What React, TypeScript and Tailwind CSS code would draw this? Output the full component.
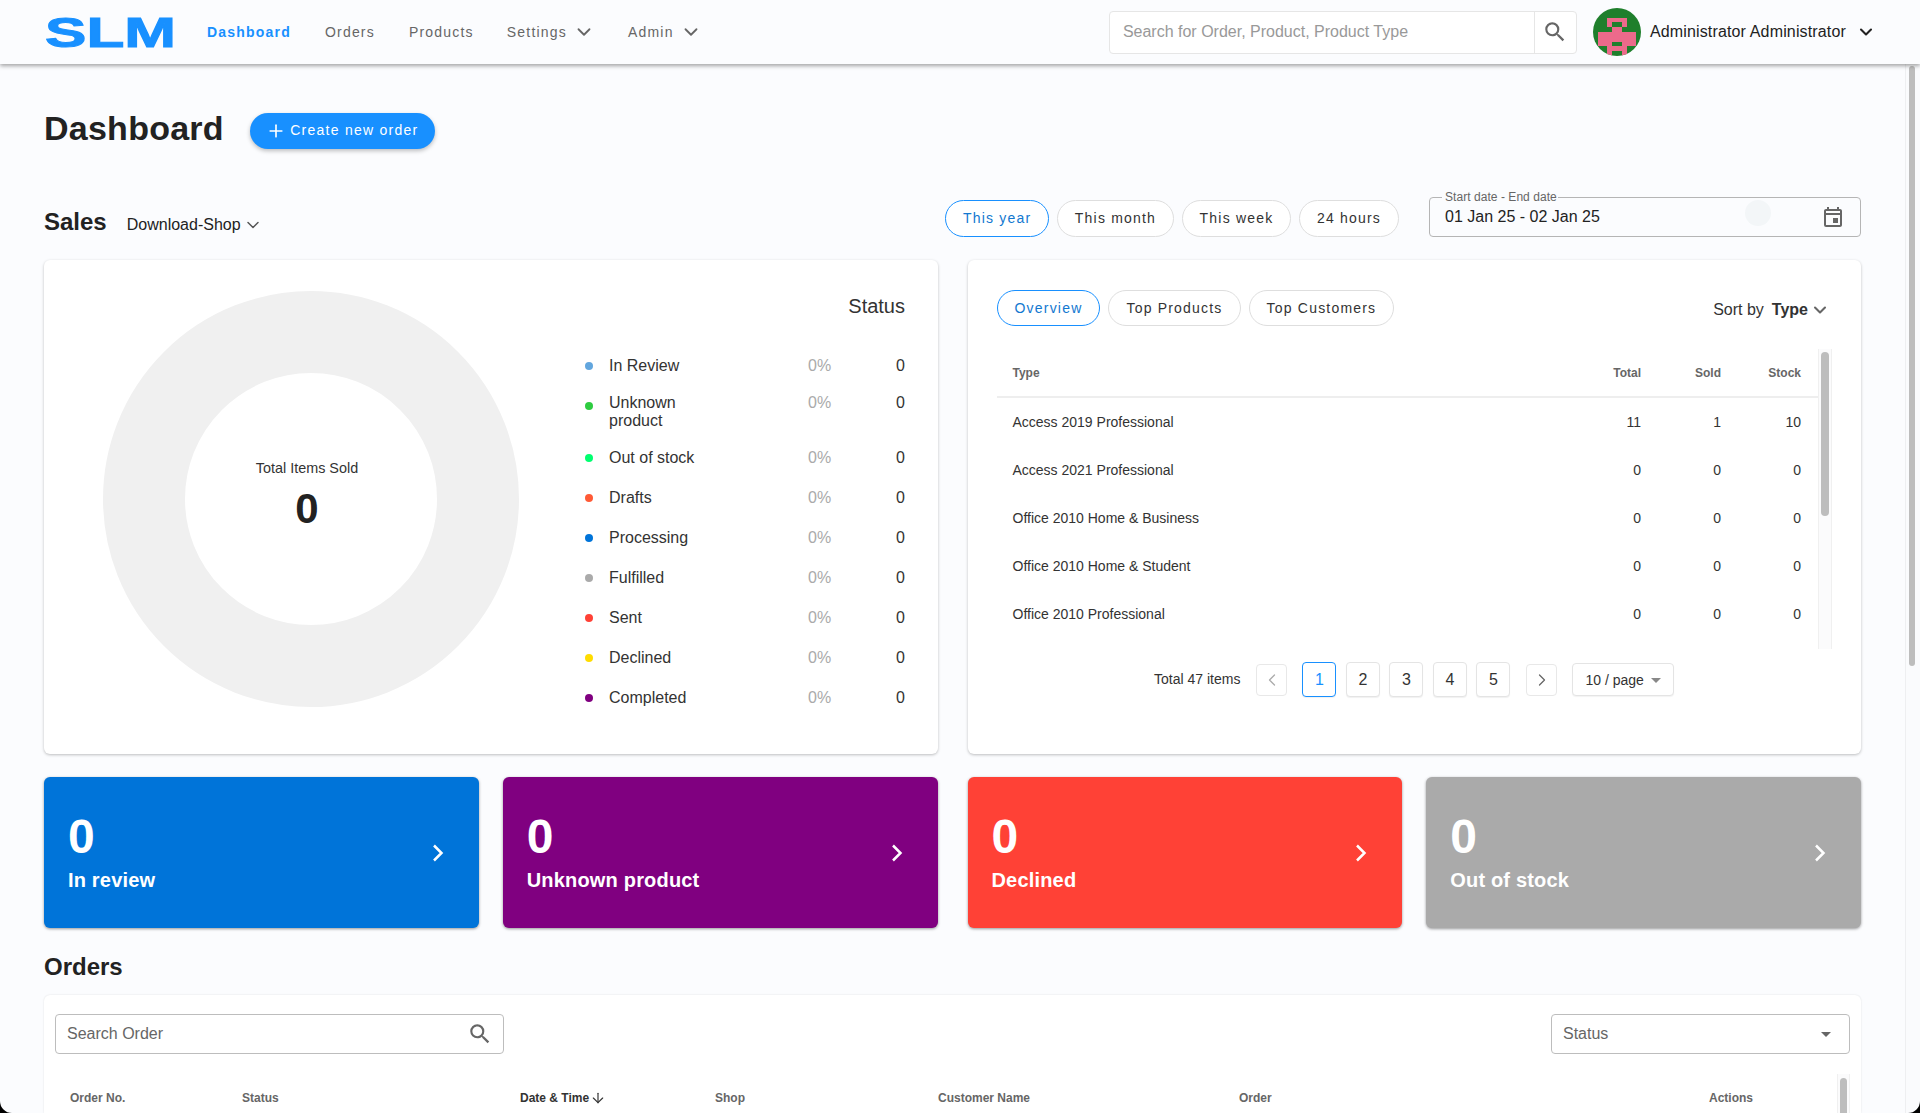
import React from "react";
import { ChevronDown, ChevronLeft, ChevronRight, Plus, ArrowDown } from "lucide-react";
import { MdSearch, MdOutlineEvent, MdArrowDropDown } from "react-icons/md";

const legend = [
  { c: "bg-[#62a6de]", l: "In Review" },
  { c: "bg-[#2ecc40]", l: "Unknown product", two: true },
  { c: "bg-[#01ff70]", l: "Out of stock" },
  { c: "bg-[#ff5a36]", l: "Drafts" },
  { c: "bg-[#0074d9]", l: "Processing" },
  { c: "bg-[#aaaaaa]", l: "Fulfilled" },
  { c: "bg-[#ff4136]", l: "Sent" },
  { c: "bg-[#ffdc00]", l: "Declined" },
  { c: "bg-[#800080]", l: "Completed" },
];

const rows = [
  ["Access 2019 Professional", "11", "1", "10"],
  ["Access 2021 Professional", "0", "0", "0"],
  ["Office 2010 Home & Business", "0", "0", "0"],
  ["Office 2010 Home & Student", "0", "0", "0"],
  ["Office 2010 Professional", "0", "0", "0"],
];

const stats = [
  [
    { l: "In review", c: "bg-[#0074d9]" },
    { l: "Unknown product", c: "bg-[#800080]" },
  ],
  [
    { l: "Declined", c: "bg-[#ff4136]" },
    { l: "Out of stock", c: "bg-[#aaaaaa]" },
  ],
];

const pink: [number, number][] = [
  [2, 3], [2, 4], [2, 5], [2, 6],
  [3, 3], [3, 6],
  [4, 4], [4, 5],
  [5, 1], [5, 2], [5, 3], [5, 4], [5, 5], [5, 6], [5, 7], [5, 8],
  [6, 1], [6, 2], [6, 3], [6, 4], [6, 5], [6, 6], [6, 7], [6, 8],
  [7, 1], [7, 2], [7, 3], [7, 6], [7, 7], [7, 8],
  [8, 3], [8, 4], [8, 5], [8, 6],
  [9, 3], [9, 6],
];

function Avatar() {
  return (
    <svg width="48" height="48" viewBox="0 0 10 10" shapeRendering="crispEdges" className="rounded-full shrink-0">
      <rect width="10" height="10" fill="#1f7f2c" />
      {pink.map(([r, c]) => (
        <rect key={`${r}-${c}`} x={c} y={r} width="1" height="1" fill="#ec6a8b" />
      ))}
    </svg>
  );
}

function Pill({ label, active }: { label: string; active?: boolean }) {
  return (
    <div
      className={`h-[37px] px-[17px] rounded-full border bg-white flex items-center text-[14px] tracking-[1.2px] ${
        active ? "border-[#1890ff] text-[#1278d0]" : "border-[#dedede] text-[#333]"
      }`}
    >
      {label}
    </div>
  );
}

function PageBtn({ n, active }: { n: string; active?: boolean }) {
  return (
    <div
      className={`w-[34px] h-[35px] rounded-[4px] border flex items-center justify-center text-[16px] bg-white shadow-[0_1px_1px_rgba(0,0,0,0.06)] ${
        active ? "border-[#1890ff] text-[#1890ff]" : "border-[#e4e4e4] text-[#333]"
      }`}
    >
      {n}
    </div>
  );
}

export default function App() {
  return (
    <div className="relative w-full h-[1113px] overflow-hidden flex flex-col bg-[#fbfcfe] text-[#222] font-['Liberation_Sans',Arial,sans-serif]">
      <header className="relative z-10 h-16 shrink-0 flex items-center bg-[#fbfcfe] shadow-[0_2px_4px_rgba(0,0,0,0.35)] pl-[45px]">
        <svg width="131" height="34" viewBox="0 0 131 34" className="shrink-0 overflow-visible" role="img" aria-label="SLM">
          <text
            x="0"
            y="32"
            fontFamily="'Liberation Sans', Arial, sans-serif"
            fontWeight="700"
            fontSize="42"
            fill="#1890ff"
            stroke="#1890ff"
            strokeWidth="1"
            textLength="131"
            lengthAdjust="spacingAndGlyphs"
          >
            SLM
          </text>
        </svg>
        <nav className="ml-[31px] flex items-center gap-[34px] text-[14px] tracking-[1.2px] text-[#666]">
          <span className="font-bold text-[#1890ff]">Dashboard</span>
          <span>Orders</span>
          <span>Products</span>
          <span className="flex items-center ml-[-1px]">
            Settings
            <ChevronDown size={22} strokeWidth={2} className="ml-[6px]" />
          </span>
          <span className="flex items-center ml-[-1px]">
            Admin
            <ChevronDown size={22} strokeWidth={2} className="ml-[6px]" />
          </span>
        </nav>
        <div className="ml-auto flex items-center pr-[44px]">
          <div className="w-[468px] h-[43px] border border-[#e6e6e6] rounded-[4px] bg-white flex items-center">
            <input
              readOnly
              placeholder="Search for Order, Product, Product Type"
              className="flex-1 min-w-0 h-full pl-[13px] text-[16px] bg-transparent outline-none placeholder:text-[#999]"
            />
            <div className="w-[42px] h-full border-l border-[#e6e6e6] flex items-center justify-center text-[#666]">
              <MdSearch size={26} />
            </div>
          </div>
          <div className="ml-4">
            <Avatar />
          </div>
          <span className="ml-[9px] text-[16px] tracking-[0.15px] text-[#222] whitespace-nowrap">Administrator Administrator</span>
          <ChevronDown size={20} strokeWidth={2.5} className="ml-[10px] text-[#222]" />
        </div>
      </header>

      <div className="flex-1 min-h-0 flex">
        <main className="flex-1 min-w-0 px-[44px] flex flex-col overflow-hidden">
          <div className="mt-12 h-9 flex items-center shrink-0">
            <h1 className="text-[34px] leading-9 font-bold tracking-[0.25px] text-[#222] mt-[-5px]">Dashboard</h1>
            <button className="ml-[26px] mt-[1px] w-[185px] h-9 rounded-full bg-[#1890ff] text-white flex items-center justify-center text-[14px] tracking-[1.25px] shadow-[0_2px_4px_rgba(0,0,0,0.25)]">
              <Plus size={20} strokeWidth={2} className="mr-[4px]" />
              Create new order
            </button>
          </div>

          <div className="mt-[49px] h-10 flex items-start shrink-0">
            <h2 className="text-[24px] leading-[50px] h-10 font-bold">Sales</h2>
            <div className="ml-[20px] mt-[16px] flex items-center text-[16px] text-[#222] leading-6">
              Download-Shop
              <ChevronDown size={20} strokeWidth={1.75} className="ml-[2px] text-[#555]" />
            </div>
            <div className="ml-auto mt-[3px] flex gap-[7.5px]">
              <Pill label="This year" active />
              <Pill label="This month" />
              <Pill label="This week" />
              <Pill label="24 hours" />
            </div>
            <div className="relative ml-[30px] w-[432px] h-10 border border-[#b5b5b5] rounded-[4px] flex items-center pl-[15px] pr-[15px]">
              <span className="absolute left-[12px] -top-[8px] pl-[3px] pr-[1px] bg-[#fbfcfe] text-[12px] tracking-[0.05px] leading-[14px] text-[#666]">
                Start date - End date
              </span>
              <span className="text-[16px] text-[#222]">01 Jan 25 - 02 Jan 25</span>
              <span className="absolute left-[315px] top-[2px] w-[26px] h-[26px] rounded-full bg-[#f3f6f8]" />
              <MdOutlineEvent size={24} className="ml-auto text-[#666]" />
            </div>
          </div>

          <div className="mt-[23px] grid grid-cols-2 gap-[30px] shrink-0">
            <section className="relative h-[494px] bg-white rounded-[6px] shadow-[0_1px_3px_rgba(0,0,0,0.25)] flex items-start pl-[59px]">
              <div className="relative w-[416px] h-[416px] mt-[31px] shrink-0">
                <svg width="416" height="416" viewBox="0 0 416 416">
                  <circle cx="208" cy="208" r="167" fill="none" stroke="#f0f0f0" strokeWidth="82" />
                </svg>
                <div className="absolute left-[-4px] right-[4px] top-[169px] flex flex-col items-center">
                  <span className="text-[14.4px] leading-4 text-[#333]">Total Items Sold</span>
                  <span className="mt-[7px] text-[42px] leading-[52px] font-bold text-[#222]">0</span>
                </div>
              </div>
              <div className="ml-[65px] w-[321px] pt-[34px] shrink-0">
                <div className="h-6 text-right text-[20px] leading-6 text-[#333]">Status</div>
                <ul className="mt-[28px]">
                  {legend.map((x) => (
                    <li key={x.l} className={`flex items-start text-[16px] leading-[18px] ${x.two ? "py-2" : "py-[11px]"}`}>
                      <span className="w-[25px] shrink-0">
                        <span className={`block w-2 h-2 rounded-full ml-[1px] ${x.c} ${x.two ? "mt-2" : "mt-[5px]"}`} />
                      </span>
                      <span className="w-[199px] shrink-0">
                        <span className="block max-w-[100px] text-[#333]">{x.l}</span>
                      </span>
                      <span className="flex-1 text-[#aaa]">0%</span>
                      <span className="text-[#333]">0</span>
                    </li>
                  ))}
                </ul>
              </div>
            </section>

            <section className="h-[494px] bg-white rounded-[6px] shadow-[0_1px_3px_rgba(0,0,0,0.25)] px-[29px] pt-[30px]">
              <div className="flex items-center h-9">
                <div className="flex gap-[8px]">
                  <div className="h-9 px-[17px] rounded-full border border-[#1890ff] flex items-center text-[14px] tracking-[1.2px] text-[#1278d0]">Overview</div>
                  <div className="h-9 px-[17px] rounded-full border border-[#dedede] flex items-center text-[14px] tracking-[1.2px] text-[#333]">Top Products</div>
                  <div className="h-9 px-[17px] rounded-full border border-[#dedede] flex items-center text-[14px] tracking-[1.2px] text-[#333]">Top Customers</div>
                </div>
                <div className="ml-auto mr-[2px] mt-[3px] flex items-center text-[16px] text-[#333]">
                  Sort by
                  <span className="ml-2 font-bold">Type</span>
                  <ChevronDown size={20} strokeWidth={2.5} className="ml-[2px] text-[#666]" />
                </div>
              </div>

              <div className="mt-[23px] h-[300px] flex overflow-hidden">
                <div className="flex-1 min-w-0 pr-[17px]">
                  <div className="-mr-[17px] pr-[17px] h-[49px] border-b-2 border-[#eeeeee] grid grid-cols-[1fr_80px_80px_80px] items-center pl-[16px] text-[12px] font-bold text-[#666]">
                    <span>Type</span>
                    <span className="text-right">Total</span>
                    <span className="text-right">Sold</span>
                    <span className="text-right">Stock</span>
                  </div>
                  {rows.map((r) => (
                    <div key={r[0]} className="h-12 grid grid-cols-[1fr_80px_80px_80px] items-center pl-[16px] text-[14px] text-[#333]">
                      <span>{r[0]}</span>
                      <span className="text-right">{r[1]}</span>
                      <span className="text-right">{r[2]}</span>
                      <span className="text-right">{r[3]}</span>
                    </div>
                  ))}
                </div>
                <div className="w-[14px] shrink-0 border-x border-[#f0f0f0] bg-[#fbfbfc] pt-[3px] px-[2px]">
                  <div className="h-[164px] rounded-full bg-[#bdbdbd]" />
                </div>
              </div>

              <div className="mt-[13px] flex items-center justify-center text-[14px] text-[#333]">
                <span className="mr-4">Total 47 items</span>
                <div className="w-[31px] h-[32px] border border-[#e8e8e8] rounded-[4px] flex items-center justify-center text-[#aaa] bg-white">
                  <ChevronLeft size={20} strokeWidth={1.5} />
                </div>
                <div className="ml-[15px] flex gap-[9.5px]">
                  <PageBtn n="1" active />
                  <PageBtn n="2" />
                  <PageBtn n="3" />
                  <PageBtn n="4" />
                  <PageBtn n="5" />
                </div>
                <div className="ml-[16px] w-[31px] h-[32px] border border-[#e8e8e8] rounded-[4px] flex items-center justify-center text-[#666] bg-white">
                  <ChevronRight size={20} strokeWidth={1.5} />
                </div>
                <div className="ml-[15px] w-[102px] h-[33px] border border-[#e4e4e4] rounded-[4px] bg-white flex items-center pl-[12px] pr-[5px] shadow-[0_1px_1px_rgba(0,0,0,0.05)]">
                  <span className="mt-[1px]">10 / page</span>
                  <MdArrowDropDown size={24} className="ml-auto text-[#888]" />
                </div>
              </div>
            </section>
          </div>

          <div className="mt-[23px] grid grid-cols-2 gap-[30px] shrink-0">
            {stats.map((g, i) => (
              <div key={i} className="grid grid-cols-2 gap-6">
                {g.map((s) => (
                  <div key={s.l} className={`h-[151px] rounded-[6px] ${s.c} text-white flex items-center justify-between pl-6 pr-[35px] shadow-[0_1px_3px_rgba(0,0,0,0.4)]`}>
                    <div className="flex flex-col">
                      <span className="text-[48px] leading-[48px] font-bold">0</span>
                      <span className="mt-[7px] text-[20px] leading-6 font-bold tracking-[0.18px]">{s.l}</span>
                    </div>
                    <svg width="12" height="18" viewBox="0 0 12 18" fill="none" stroke="white" strokeWidth="2.5" className="-ml-[1px]">
                      <path d="M2 1.5 L9.5 9 L2 16.5" />
                    </svg>
                  </div>
                ))}
              </div>
            ))}
          </div>

          <h2 className="mt-[23px] h-8 text-[24px] leading-8 font-bold shrink-0">Orders</h2>

          <section className="mt-3 flex-1 bg-white rounded-t-[6px] shadow-[0_0_2px_rgba(0,0,0,0.12)] px-[11px] pt-[19px] min-h-0">
            <div className="flex justify-between">
              <div className="w-[449px] h-10 border border-[#bdbdbd] rounded-[4px] flex items-center pl-[11px] pr-[10px] text-[16px] text-[#666]">
                Search Order
                <MdSearch size={26} className="ml-auto text-[#666]" />
              </div>
              <div className="w-[299px] h-10 border border-[#bdbdbd] rounded-[4px] flex items-center pl-[11px] pr-[11px] text-[16px] text-[#666]">
                Status
                <MdArrowDropDown size={24} className="ml-auto text-[#666]" />
              </div>
            </div>
            <div className="mt-5 flex h-[40px]">
              <div className="flex-1 min-w-0 h-12 pl-[15px] flex items-center text-[12px] font-bold text-[#666] whitespace-nowrap">
                <span className="w-[172px]">Order No.</span>
                <span className="w-[278px]">Status</span>
                <span className="w-[195px] flex items-center text-[#333]">
                  Date &amp; Time
                  <ArrowDown size={16} strokeWidth={1.75} className="ml-[1px]" />
                </span>
                <span className="w-[223px]">Shop</span>
                <span className="w-[301px]">Customer Name</span>
                <span className="w-[470px]">Order</span>
                <span>Actions</span>
              </div>
              <div className="w-[13px] shrink-0 border-x border-[#f0f0f0] bg-[#fbfbfc] pt-[4px] px-[2px]">
                <div className="h-[80px] rounded-full bg-[#bdbdbd]" />
              </div>
            </div>
          </section>
        </main>

        <aside className="w-[15px] shrink-0 border-l border-[#eeeff1] bg-[#fafbfd] pt-[2px] pl-[3px]">
          <div className="w-[6px] h-[600px] rounded-full bg-[#bdbdbd]" />
        </aside>
      </div>

      <svg width="12" height="12" viewBox="0 0 12 12" className="absolute left-0 bottom-0">
        <path d="M0 0 A12 12 0 0 0 12 12 L0 12 Z" fill="#000" />
      </svg>
      <svg width="12" height="12" viewBox="0 0 12 12" className="absolute right-0 bottom-0">
        <path d="M12 0 A12 12 0 0 1 0 12 L12 12 Z" fill="#000" />
      </svg>
    </div>
  );
}
